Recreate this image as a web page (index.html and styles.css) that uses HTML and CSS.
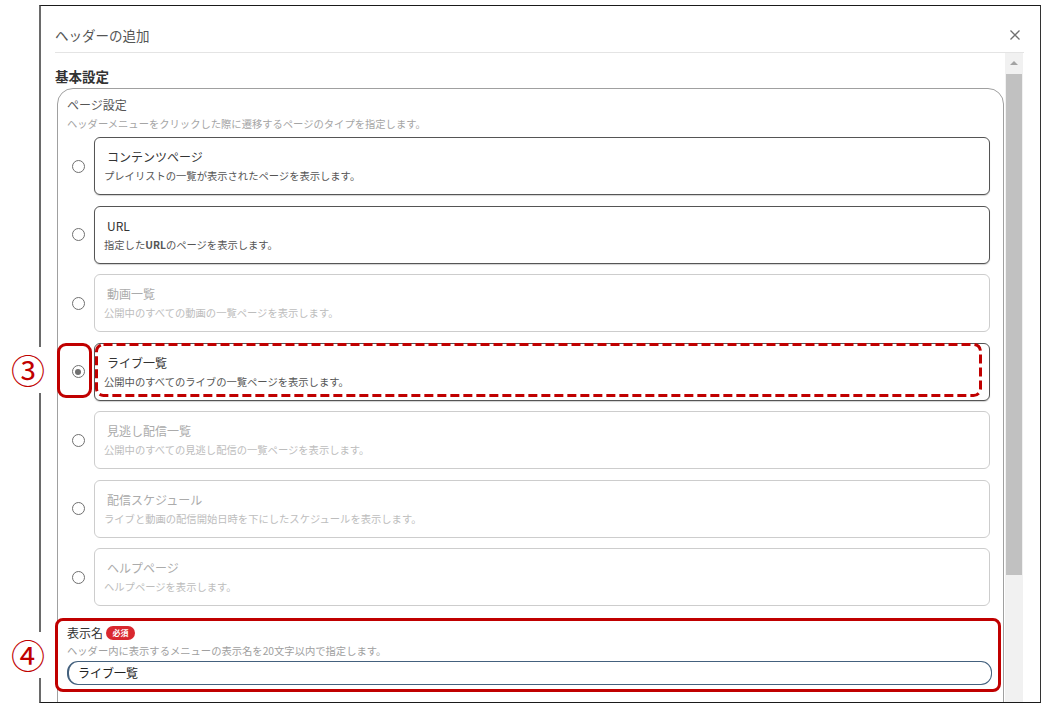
FILE: index.html
```html
<!DOCTYPE html>
<html lang="ja">
<head>
<meta charset="utf-8">
<title>ヘッダーの追加</title>
<link rel="stylesheet" href="styles.css">
</head>
<body>
<div class="page">
  <div class="frame">
    <div class="dlg-header">
      <div class="dlg-title">ヘッダーの追加</div>
      <div class="dlg-close">
        <svg width="12" height="12" viewBox="0 0 12 12"><path d="M1.5 1.5 L10.5 10.5 M10.5 1.5 L1.5 10.5" stroke="#707070" stroke-width="1.3" fill="none"/></svg>
      </div>
    </div>
    <div class="dlg-body">
      <div class="content">
        <div class="section-title">基本設定</div>
        <div class="group">
          <div class="group-label">ページ設定</div>
          <div class="group-desc">ヘッダーメニューをクリックした際に遷移するページのタイプを指定します。</div>
          <div class="options">
            <div class="option">
              <div class="radio-col"><span class="radio"></span></div>
              <div class="card">
                <div class="card-title">コンテンツページ</div>
                <div class="card-desc">プレイリストの一覧が表示されたページを表示します。</div>
              </div>
            </div>
            <div class="option">
              <div class="radio-col"><span class="radio"></span></div>
              <div class="card">
                <div class="card-title">URL</div>
                <div class="card-desc">指定した<b>URL</b>のページを表示します。</div>
              </div>
            </div>
            <div class="option">
              <div class="radio-col"><span class="radio"></span></div>
              <div class="card disabled">
                <div class="card-title">動画一覧</div>
                <div class="card-desc">公開中のすべての動画の一覧ページを表示します。</div>
              </div>
            </div>
            <div class="option marked">
              <div class="radio-col"><span class="radio checked"></span></div>
              <div class="card">
                <div class="card-title">ライブ一覧</div>
                <div class="card-desc">公開中のすべてのライブの一覧ページを表示します。</div>
              </div>
              <div class="mark-radio"></div>
              <svg class="mark-dash" width="887" height="54" viewBox="0 0 887 54"><rect x="1.5" y="1.5" width="884" height="51" rx="7" ry="7" fill="none" stroke="#c00000" stroke-width="3" stroke-dasharray="9 4"/></svg>
            </div>
            <div class="option">
              <div class="radio-col"><span class="radio"></span></div>
              <div class="card disabled">
                <div class="card-title">見逃し配信一覧</div>
                <div class="card-desc">公開中のすべての見逃し配信の一覧ページを表示します。</div>
              </div>
            </div>
            <div class="option">
              <div class="radio-col"><span class="radio"></span></div>
              <div class="card disabled">
                <div class="card-title">配信スケジュール</div>
                <div class="card-desc">ライブと動画の配信開始日時を下にしたスケジュールを表示します。</div>
              </div>
            </div>
            <div class="option">
              <div class="radio-col"><span class="radio"></span></div>
              <div class="card disabled">
                <div class="card-title">ヘルプページ</div>
                <div class="card-desc">ヘルプページを表示します。</div>
              </div>
            </div>
          </div>
          <div class="name-field">
            <div class="field-label">表示名<span class="badge">必須</span></div>
            <div class="field-desc">ヘッダー内に表示するメニューの表示名を20文字以内で指定します。</div>
            <div class="input">ライブ一覧</div>
            <div class="mark-box"></div>
          </div>
        </div>
      </div>
      <div class="scrollbar">
        <div class="sb-up"><span class="sb-arrow"></span></div>
        <div class="sb-thumb"></div>
      </div>
    </div>
  </div>
  <div class="callout callout-3">③</div>
  <div class="callout callout-4">④</div>
</div>
</body>
</html>
```
FILE: styles.css
```css
* { box-sizing: border-box; }
html, body { margin: 0; padding: 0; background: #fff; }
body {
  font-family: "Noto Sans CJK JP", "Noto Sans", sans-serif;
  color: #333;
}
.page {
  position: relative;
  width: 1049px;
  height: 710px;
  padding: 5px 0 0 39px;
}
.frame {
  width: 1002px;
  height: 698px;
  border-top: 1px solid #1a1a1a;
  border-right: 1px solid #333;
  border-bottom: 1px solid #1a1a1a;
  border-left: 2px solid #6a6a6a;
  overflow: hidden;
}
.dlg-header {
  display: flex;
  justify-content: space-between;
  align-items: flex-start;
  height: 47px;
  margin: 0 16px 0 14px;
  padding-top: 19px;
  border-bottom: 1px solid #e4e4e4;
}
.dlg-title {
  font-size: 13.5px;
  line-height: 20px;
  color: #555;
}
.dlg-close {
  width: 18px;
  height: 20px;
  display: flex;
  align-items: center;
  justify-content: center;
}
.dlg-body {
  display: flex;
  margin-left: 14px;
  width: 968px;
  height: 649px;
  overflow: hidden;
}
.content {
  flex: 1;
  padding-top: 14px;
}
.section-title {
  font-size: 13.5px;
  font-weight: bold;
  line-height: 18px;
  color: #333;
  margin-bottom: 3px;
}
.group {
  margin: 0 1px 0 2px;
  border: 1px solid #a0a0a0;
  border-radius: 16px;
  padding: 7px 13px 0 9px;
  height: 700px;
}
.group-label {
  font-size: 12px;
  line-height: 18px;
  color: #555;
}
.group-desc {
  font-size: 10.3px;
  line-height: 14px;
  color: #a5a5a5;
  margin-top: 3px;
  white-space: nowrap;
}
.options {
  display: flex;
  flex-direction: column;
  gap: 10.5px;
  margin-top: 6px;
}
.option {
  position: relative;
  display: flex;
  align-items: center;
  height: 58px;
}
.radio-col {
  width: 27px;
  flex: none;
  padding-left: 4.5px;
  display: flex;
  align-items: center;
}
.radio {
  width: 13px;
  height: 13px;
  border: 1.5px solid #707070;
  border-radius: 50%;
  display: flex;
  align-items: center;
  justify-content: center;
}
.radio.checked::after {
  content: "";
  width: 6px;
  height: 6px;
  border-radius: 50%;
  background: #707070;
}
.card {
  flex: 1;
  height: 58px;
  border: 1px solid #555;
  border-radius: 6px;
  padding-top: 11px;
  box-shadow: 0 1px 1px rgba(0,0,0,0.18);
  background: #fff;
}
.card.disabled {
  border-color: #cdcdcd;
  box-shadow: none;
}
.card-title {
  font-size: 12px;
  line-height: 16px;
  padding-left: 12px;
  color: #333;
}
.card-desc {
  font-size: 10.3px;
  line-height: 14px;
  margin-top: 4px;
  padding-left: 9px;
  color: #555;
  white-space: nowrap;
}
.card-desc b { font-weight: bold; }
.card.disabled .card-title { color: #ababab; }
.card.disabled .card-desc { color: #bdbdbd; }
.mark-radio {
  position: absolute;
  left: -10px;
  top: 0;
  width: 35px;
  height: 55px;
  border: 3px solid #c00000;
  border-radius: 9px;
}
.mark-dash {
  position: absolute;
  left: 28px;
  top: 0;
}
.name-field {
  position: relative;
  margin-top: 12px;
  padding: 6px 0 7px;
}
.field-label {
  font-size: 12px;
  line-height: 18px;
  color: #333;
  display: flex;
  align-items: center;
}
.badge {
  display: inline-flex;
  align-items: center;
  justify-content: center;
  margin-left: 3px;
  width: 29px;
  height: 14px;
  border-radius: 7px;
  background: #d9282f;
  color: #fff;
  font-size: 8px;
  font-weight: bold;
  line-height: 14px;
}
.field-desc {
  font-size: 10.3px;
  line-height: 14px;
  margin-top: 2px;
  color: #a0a0a0;
  white-space: nowrap;
}
.input {
  margin-top: 3px;
  margin-right: -2px;
  height: 24px;
  border: 1px solid #44617e;
  border-left-width: 2px;
  border-radius: 11px;
  padding-left: 9px;
  font-size: 12px;
  line-height: 22px;
  color: #222;
}
.mark-box {
  position: absolute;
  left: -12px;
  right: -11px;
  top: 0;
  bottom: 0;
  border: 3px solid #c00000;
  border-radius: 8px;
}
.scrollbar {
  width: 18px;
  flex: none;
  background: #f1f1f1;
  display: flex;
  flex-direction: column;
  align-items: center;
}
.sb-up {
  height: 20px;
  width: 100%;
  display: flex;
  align-items: center;
  justify-content: center;
}
.sb-arrow {
  width: 0;
  height: 0;
  border-left: 4.5px solid transparent;
  border-right: 4.5px solid transparent;
  border-bottom: 4.5px solid #a3a3a3;
}
.sb-thumb {
  margin-top: 1px;
  width: 16px;
  height: 501px;
  background: #c1c1c1;
}
.callout {
  position: absolute;
  left: 6px;
  width: 44px;
  height: 46px;
  background: #fff;
  color: #c00000;
  font-size: 34px;
  line-height: 46px;
  text-align: center;
}
.callout-3 { top: 347px; }
.callout-4 { top: 632px; }
```
